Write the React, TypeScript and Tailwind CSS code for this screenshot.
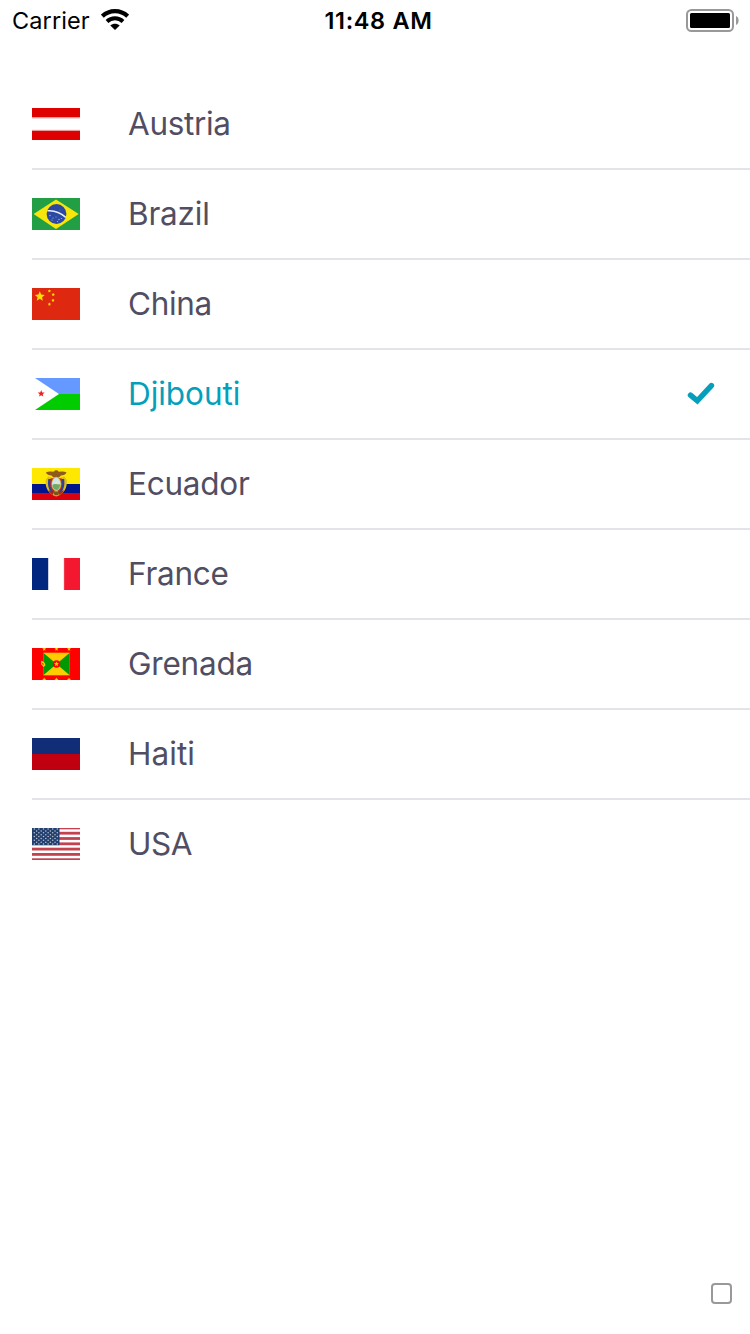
import type { ReactNode } from 'react';

const star = (cx: number, cy: number, r: number, inner = 0.45) =>
  Array.from({ length: 10 }, (_, i) => {
    const a = -Math.PI / 2 + (i * Math.PI) / 5;
    const d = i % 2 ? r * inner : r;
    return `${(cx + d * Math.cos(a)).toFixed(2)},${(cy + d * Math.sin(a)).toFixed(2)}`;
  }).join(' ');

function Flag({ children }: { children: ReactNode }) {
  return (
    <svg className="h-8 w-12 shrink-0" viewBox="0 0 48 32">
      {children}
    </svg>
  );
}

const Austria = (
  <Flag>
    <path fill="#df0000" d="M0 0h48v9.6H0zM0 22.4h48V32H0z" />
    <path fill="#f3b5ae" d="M0 9.6h48v1H0z" />
    <path fill="#e8bcbc" d="M0 21.7h48v.7H0z" />
  </Flag>
);

const Brazil = (
  <Flag>
    <path fill="#229e45" d="M0 0h48v32H0z" />
    <path fill="#f8e509" d="M1.6 16 24 1.4 46.7 16 24 31z" />
    <circle cx="24.5" cy="16" r="9.9" fill="#2b49a3" />
    <path d="M15.4 12.8c7-.7 13.5 2.2 18.4 6.6" fill="none" stroke="#e8eef3" strokeWidth="1.5" />
    <g fill="#a9b6d6">
      <circle cx="18" cy="17.5" r=".7" />
      <circle cx="21" cy="20" r=".6" />
      <circle cx="20" cy="22" r=".6" />
      <circle cx="24" cy="19" r=".5" />
      <circle cx="27" cy="21.5" r=".7" />
      <circle cx="29.5" cy="20.5" r=".6" />
      <circle cx="25.5" cy="23.5" r=".6" />
      <circle cx="28" cy="12" r=".4" />
    </g>
  </Flag>
);

const China = (
  <Flag>
    <path fill="#de2910" d="M0 0h48v32H0z" />
    <g fill="#ffde00">
      <polygon points={star(7.8, 8.5, 5.2)} />
      <polygon points={star(17.4, 3, 1.6, 0.6)} />
      <polygon points={star(21.2, 6.6, 1.6, 0.6)} />
      <polygon points={star(21, 12.4, 1.6, 0.6)} />
      <polygon points={star(17.4, 16.2, 1.6, 0.6)} />
    </g>
  </Flag>
);

const Djibouti = (
  <Flag>
    <path fill="#6699ff" d="M3 0h45v16H27z" />
    <path fill="#00cc00" d="M3 32h45V16H27z" />
    <polygon fill="#f01c24" points={star(9.2, 15.7, 3.6)} />
  </Flag>
);

const Ecuador = (
  <Flag>
    <path fill="#ffe800" d="M0 0h48v16H0z" />
    <path fill="#00148e" d="M0 16h48v9H0z" />
    <path fill="#da0010" d="M0 25h48v7H0z" />
    <path
      fill="#8f5a1c"
      d="M13.8 4.4c3.4-1.6 6-.4 8.400-.8.2-1.800 3.800-1.800 4 0 2.400.4 5-.8 8.400.8-1 1.800-3 2.800-5.600 3.200l-2.200 2H21.600l-2.200-2c-2.600-.4-4.600-1.400-5.600-3.200z"
    />
    <path fill="#e0bd1c" d="M16.200 8.500 13.600 12c-.6 8 2.800 14 10.600 16.600C32.300 26 35.400 20 34.800 12l-2.600-3.500L24.200 11z" />
    <path fill="#2a4596" d="M16.300 11c-1 6.500.3 11.500 4.700 14.800l1.500-2.500c-3-3-4-7-3.200-12.300zM32.100 11c1 6.500-.3 11.500-4.700 14.800l-1.500-2.500c3-3 4-7 3.200-12.300z" />
    <path fill="#c42a22" d="M18.700 10.500c-1.200 6-.5 10.500 3.100 13.500l1.200-2V10zM29.700 10.500c1.200 6 .5 10.500-3.100 13.500l-1.200-2V10z" />
    <path fill="#b3241e" d="m16.500 22 5 2.500-.5 2.500c-2-.8-3.800-2.400-4.500-5zM31.900 22l-5 2.500.5 2.500c2-.8 3.800-2.400 4.500-5z" />
    <path fill="#7f531d" d="M21 23.500h6.800l-1.600 3.800h-3.600z" />
    <ellipse cx="24.300" cy="16" rx="5" ry="7.200" fill="#d0a92a" />
    <ellipse cx="24.300" cy="16" rx="4.200" ry="6.400" fill="#c9e4ee" />
    <path fill="#6eaa65" d="M20.400 17c2.500-2 5.200-.6 7.800-.6-.2 2.600-1.600 5.600-4 5.700-2.200-.3-3.600-2.500-3.800-5.100z" />
    <path fill="#e9e5cb" d="m22 15.600 2.800-3 2.200 3z" />
  </Flag>
);

const France = (
  <Flag>
    <path fill="#00267f" d="M0 0h16v32H0z" />
    <path fill="#bdc5da" d="M16 0h.8v32H16z" />
    <path fill="#f31830" d="M32 0h16v32H32z" />
    <path fill="#f7b0b7" d="M31.700 0h.5v32h-.5z" />
  </Flag>
);

const Grenada = (
  <Flag>
    <path fill="#f00" d="M0 0h48v32H0z" />
    <path fill="#fc0" d="M11.300 4.700h26.400v22.600H11.300z" />
    <path fill="#009900" d="M11.300 4.700 24.500 16 11.300 27.300zM37.700 4.700 24.500 16l13.200 11.300z" />
    <circle cx="24.500" cy="16" r="3.700" fill="#f00" />
    <polygon fill="#fc0" points={star(24.5, 16, 2.600)} />
    <path fill="#fc0" d="M9.200 12.800c2.400.6 3.900 2 4.200 4.400l-1.700 1.800-2.500-2.400z" />
    <path fill="#f00" d="m10 15 1.400.5.400 1.500-1.500-.7z" />
    <g fill="#fc0">
      <polygon points={star(12.2, 1, 2.100)} />
      <polygon points={star(24.5, 1, 2.100)} />
      <polygon points={star(37, 1, 2.100)} />
      <polygon points={star(12.2, 31.600, 2.100)} />
      <polygon points={star(24.5, 31.600, 2.100)} />
      <polygon points={star(37, 31.600, 2.100)} />
    </g>
  </Flag>
);

const Haiti = (
  <Flag>
    <path fill="#112d77" d="M0 0h48v16H0z" />
    <path fill="#c00010" d="M0 16h48v16H0z" />
  </Flag>
);

const stripes = [0, 1, 2, 3, 4, 5, 6];
const starRows = [0, 1, 2, 3, 4, 5, 6, 7, 8];

const Usa = (
  <Flag>
    <path fill="#fff" d="M0 0h48v32H0z" />
    {stripes.map((i) => (
      <rect key={i} y={i * 5.3 - 1.5} width="48" height="2.8" fill="#c4414f" />
    ))}
    <path fill="#223f70" d="M0 0h27.500v17.200H0z" />
    <g fill="#b9c4d3">
      {starRows.map((r) =>
        Array.from({ length: r % 2 ? 5 : 6 }, (_, c) => (
          <circle key={`${r}-${c}`} cx={2.3 + c * 4.6 + (r % 2 ? 2.3 : 0)} cy={1 + r * 1.88} r=".75" />
        )),
      )}
    </g>
  </Flag>
);

const countries = [
  { name: 'Austria', flag: Austria, tracking: 'tracking-[-0.35px]' },
  { name: 'Brazil', flag: Brazil, tracking: 'tracking-[-0.2px]' },
  { name: 'China', flag: China, tracking: 'tracking-[-0.35px]' },
  { name: 'Djibouti', flag: Djibouti, tracking: 'tracking-[-0.05px]', selected: true },
  { name: 'Ecuador', flag: Ecuador, tracking: 'tracking-[-0.25px]' },
  { name: 'France', flag: France, tracking: 'tracking-[-0.25px]' },
  { name: 'Grenada', flag: Grenada, tracking: 'tracking-[-0.2px]' },
  { name: 'Haiti', flag: Haiti, tracking: 'tracking-[0.05px]' },
  { name: 'USA', flag: Usa, tracking: 'tracking-[-0.5px]' },
];

function StatusBar() {
  return (
    <header className="grid h-10 grid-cols-3 items-center pl-3 pr-[10px] text-black">
      <div className="flex items-center">
        <span className="w-[89px] pt-0.5 text-[23.5px] leading-[38px] tracking-[0.1px]">Carrier</span>
        <svg className="h-[22px] w-7" viewBox="0 0 28 22">
          <path d="M1.300 7.200C8.500.4 19.500.4 26.700 7.200" fill="none" stroke="#000" strokeWidth="4.200" />
          <path d="M6 12.400c4.600-4.200 11.400-4.200 16 0" fill="none" stroke="#000" strokeWidth="4" />
          <path d="M14 21 9.300 16.600c2.600-2.400 6.800-2.400 9.400 0z" fill="#000" />
        </svg>
      </div>
      <span className="pl-[5px] pt-0.5 text-center text-[23.5px] font-semibold leading-[38px] tracking-[0.65px]">
        11:48 AM
      </span>
      <svg className="h-6 w-[54px] justify-self-end" viewBox="0 0 54 24">
        <rect x="1" y="2" width="46" height="21" rx="4.500" fill="none" stroke="#999" strokeWidth="2" />
        <rect x="4" y="5" width="40" height="15" rx="1.500" fill="#000" />
        <path d="M50 8c3.500 1.500 3.500 7.500 0 9z" fill="#999" />
      </svg>
    </header>
  );
}

export default function App() {
  return (
    <div className="flex h-[1334px] w-[750px] flex-col overflow-hidden bg-white font-['Inter',sans-serif]">
      <StatusBar />
      <ul className="mt-10 flex flex-col pl-8">
        {countries.map((c) => (
          <li
            key={c.name}
            className="flex h-[90px] items-center border-b-2 border-[#e3e3e8] pr-[35px] last:border-transparent"
          >
            {c.flag}
            <span
              className={`ml-12 flex-1 text-[31.5px] leading-10 ${c.tracking} ${c.selected ? 'text-[#059fbc]' : 'text-[#514e63]'}`}
            >
              {c.name}
            </span>
            {c.selected && (
              <svg className="h-6 w-7" viewBox="0 0 28 24">
                <path d="m3.500 13.200 6.800 5.600L24.400 3.600" fill="none" stroke="#059fbc" strokeWidth="5.500" strokeLinecap="round" />
              </svg>
            )}
          </li>
        ))}
      </ul>
      <div className="mt-auto flex justify-end pb-[30px] pr-[18px]">
        <span className="size-[21px] rounded-[4px] border-2 border-[#999]" />
      </div>
    </div>
  );
}
